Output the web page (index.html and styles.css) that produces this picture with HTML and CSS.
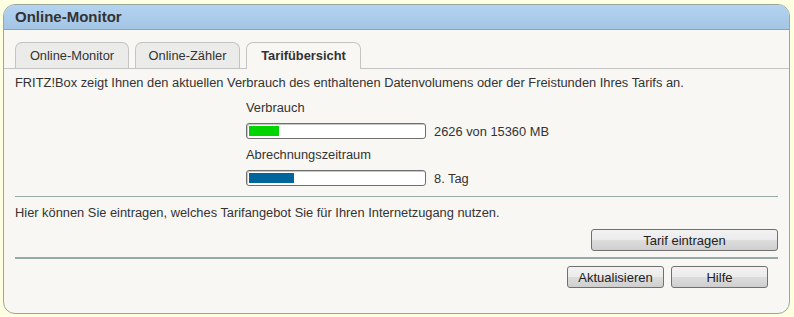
FILE: index.html
```html
<!DOCTYPE html>
<html lang="de">
<head>
    <meta charset="UTF-8">
    <title>Online-Monitor</title>
    <link rel="stylesheet" href="styles.css">
</head>
<body>
    <div class="box">
        <div class="box-head">Online-Monitor</div>

        <div class="tabs">
            <a class="tab">Online-Monitor</a>
            <a class="tab">Online-Zähler</a>
            <a class="tab active">Tarifübersicht</a>
        </div>

        <div class="box-body">
            <p class="intro">FRITZ!Box zeigt Ihnen den aktuellen Verbrauch des enthaltenen Datenvolumens oder der Freistunden Ihres Tarifs an.</p>

            <div class="usage">
                <div class="usage-label">Verbrauch</div>
                <div class="usage-row">
                    <div class="bar"><div class="bar-fill green" style="width: 17%"></div></div>
                    <span>2626 von 15360 MB</span>
                </div>
                <div class="usage-label">Abrechnungszeitraum</div>
                <div class="usage-row">
                    <div class="bar"><div class="bar-fill blue" style="width: 26%"></div></div>
                    <span>8. Tag</span>
                </div>
            </div>

            <div class="tarif">
                <p>Hier können Sie eintragen, welches Tarifangebot Sie für Ihren Internetzugang nutzen.</p>
                <div class="btn-row">
                    <button class="btn wide">Tarif eintragen</button>
                </div>
            </div>

            <div class="btn-row footer">
                <button class="btn">Aktualisieren</button>
                <button class="btn">Hilfe</button>
            </div>
        </div>
    </div>
</body>
</html>
```

FILE: styles.css
```css
* {
    margin: 0;
    padding: 0;
    box-sizing: border-box;
}

body {
    font-family: 'Liberation Sans', Arial, sans-serif;
    font-size: 12.85px;
    color: #333;
    background: #ffffe1;
    padding: 4px 4px 3px 3px;
    height: 317px;
}

.box {
    height: 310px;
    background: #f8f7f3;
    border: 1px solid #98a89e;
    border-radius: 12px;
    overflow: hidden;
}

.box-head {
    height: 25px;
    line-height: 24px;
    padding-left: 11px;
    font-size: 15px;
    font-weight: bold;
    color: #333;
    background: linear-gradient(#b3d3f1, #a4c5e4);
    border-bottom: 1px solid #8fa3a6;
}

.tabs {
    display: flex;
    gap: 6px;
    padding: 12px 0 0 11px;
    border-bottom: 1px solid #c4c4c4;
}

.tab {
    height: 26px;
    line-height: 26px;
    text-align: center;
    background: #ebebe9;
    border: 1px solid #c4c4c4;
    border-bottom: none;
    border-radius: 7px 7px 0 0;
    margin-bottom: -1px;
    width: 114px;
}

.tab:nth-child(2) {
    width: 105px;
}

.tab.active {
    width: 115px;
    font-weight: bold;
    background: #f8f7f3;
    height: 27px;
}

.box-body {
    padding: 0 11px;
}

.intro {
    line-height: 15px;
    padding-top: 6px;
}

.usage {
    padding: 10px 0 0 231px;
}

.usage-label {
    line-height: 15px;
    margin-bottom: 8px;
}

.usage-row {
    display: flex;
    align-items: center;
    gap: 8px;
    margin-bottom: 8px;
}

.usage-row:last-child {
    margin-bottom: 10px;
}

.bar {
    width: 180px;
    height: 16px;
    background: #fff;
    border: 1px solid #6f6f6f;
    border-radius: 3px;
    padding: 2px;
    box-shadow: inset 1px 1px 0 #c8c8c8;
}

.bar-fill {
    height: 100%;
}

.bar-fill.green {
    background: #00d400;
}

.bar-fill.blue {
    background: #00659a;
}

.tarif {
    border-top: 1px solid #98aaa8;
    padding-top: 8px;
}

.tarif p {
    line-height: 15px;
}

.btn-row {
    display: flex;
    justify-content: flex-end;
    gap: 7px;
    padding: 9px 0 6px;
}

.footer {
    border-top: 2px solid #98aaa8;
    padding: 7px 10px 0 0;
}

.btn {
    font-family: 'Liberation Sans', Arial, sans-serif;
    font-size: 13px;
    color: #222;
    height: 22px;
    width: 97px;
    border: 1px solid #707070;
    border-radius: 3px;
    background: linear-gradient(#f2f2f2 0%, #ebebeb 50%, #dddddd 51%, #cfcfcf 100%);
}

.btn.wide {
    width: 187px;
}
```
